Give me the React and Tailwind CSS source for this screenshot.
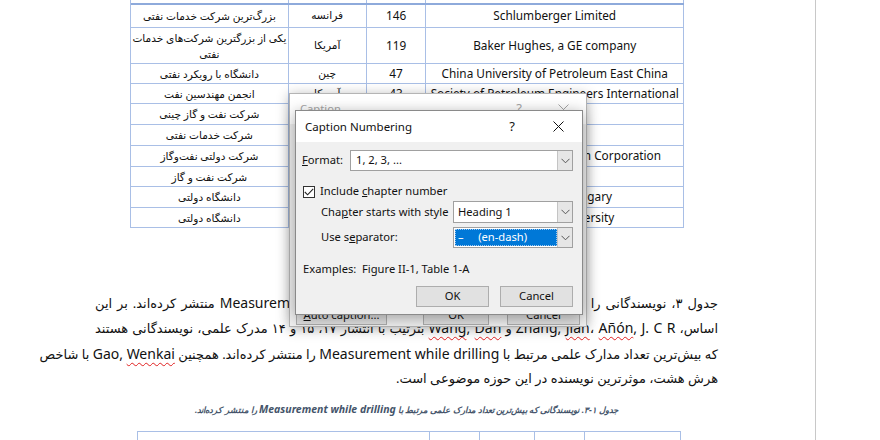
const rows = [
  { h: "h-[23px]", fa: ["بزرگ‌ترین شرکت خدمات نفتی"], c: "فرانسه", n: "146", en: "Schlumberger Limited" },
  { h: "h-[36px]", fa: ["یکی از بزرگترین شرکت‌های خدمات", "نفتی"], c: "آمریکا", n: "119", en: "Baker Hughes, a GE company" },
  { h: "h-[20px]", fa: ["دانشگاه با رویکرد نفتی"], c: "چین", n: "47", en: "China University of Petroleum East China" },
  { h: "h-[20px]", fa: ["انجمن مهندسین نفت"], c: "آمریکا", n: "43", en: "Society of Petroleum Engineers International" },
  { h: "h-[21px]", fa: ["شرکت نفت و گاز چینی"], c: "چین", n: "40", en: "Sinopec" },
  { h: "h-[21px]", fa: ["شرکت خدمات نفتی"], c: "آمریکا", n: "35", en: "Halliburton" },
  { h: "h-[21px]", fa: ["شرکت دولتی نفت‌وگاز"], c: "چین", n: "33", en: "China National Petroleum Corporation" },
  { h: "h-[20px]", fa: ["شرکت نفت و گاز"], c: "نروژ", n: "30", en: "Statoil ASA" },
  { h: "h-[21px]", fa: ["دانشگاه دولتی"], c: "کانادا", n: "28", en: "University of Calgary" },
  { h: "h-[20px]", fa: ["دانشگاه دولتی"], c: "آمریکا", n: "26", en: "Texas A&M University" },
];

const cell = "flex items-center justify-center border-r border-b border-[#a9bfe6] whitespace-nowrap overflow-hidden";

function TopTable() {
  return (
    <div className="ml-[35px] w-[554px] border-l border-[#a9bfe6] text-[#111]">
      <div className="flex h-[5px] border-b-2 border-[#8eaadb]">
        <div className="w-[158px] border-r border-[#a9bfe6]" />
        <div className="w-[78px] border-r border-[#a9bfe6]" />
        <div className="w-[60px] border-r border-[#a9bfe6]" />
        <div className="w-[258px] border-r border-[#a9bfe6]" />
      </div>
      {rows.map((r, i) => (
        <div key={i} className={"flex " + r.h}>
          <div dir="rtl" className={cell + " w-[158px] flex-col text-[10.6px] leading-[16px]"}>
            {r.fa.map((t, j) => (
              <span key={j}>{t}</span>
            ))}
          </div>
          <div dir="rtl" className={cell + " w-[78px] text-[10.6px]"}>{r.c}</div>
          <div className={cell + " w-[60px] text-[11.8px]"}>{r.n}</div>
          <div className={cell + " w-[258px] text-[11.8px]"}>{r.en}</div>
        </div>
      ))}
    </div>
  );
}

const en = "text-[14px]";
const typo = "underline decoration-wavy decoration-[#e02020] decoration-1 underline-offset-[3px]";

function Paragraph() {
  const line = "w-[623px] whitespace-nowrap text-justify [text-align-last:justify] h-[25.3px] leading-[25.3px]";
  return (
    <div dir="rtl" className="mt-[62px] text-[13px] text-[#111]">
      <div className={line}>
        جدول ۳، نویسندگانی را نشان می‌دهد که بیشترین مدارک{" "}
        <span className={en}>Measurement while drilling</span> منتشر کرده‌اند. بر این
      </div>
      <div className={line}>
        اساس، <span className={en}>Zhang, <span className={typo}>Jian</span>، <span className={typo}>Añón</span>, J. C R</span> و{" "}
        <span className={en}><span className={typo}>Wang</span>, <span className={typo}>Dan</span></span> بترتیب با انتشار ۱۷، ۱۵ و ۱۴ مدرک علمی، نویسندگانی هستند
      </div>
      <div className={line}>
        که بیش‌ترین تعداد مدارک علمی مرتبط با <span className={en}>Measurement while drilling</span> را منتشر کرده‌اند. همچنین{" "}
        <span className={en}>Gao, <span className={typo}>Wenkai</span></span> با شاخص
      </div>
      <div className="h-[25.3px] leading-[25.3px] whitespace-nowrap">هرش هشت، موثرترین نویسنده در این حوزه موضوعی است.</div>
    </div>
  );
}

function CaptionLine() {
  return (
    <div dir="rtl" className="mt-[8px] h-[20px] leading-[20px] text-center whitespace-nowrap font-bold italic text-[#44546a] text-[8.5px]">
      جدول ۱-۳. نویسندگانی که بیش‌ترین تعداد مدارک علمی مرتبط با{"  "}
      <span className="text-[10.5px]">Measurement while drilling</span> را منتشر کرده‌اند.
    </div>
  );
}

function BottomTable() {
  const c = "h-[20px] border-r border-[#a9bfe6]";
  return (
    <div className="mt-[12px] ml-[42px] w-[544px] flex border-t border-l border-[#a9bfe6]">
      <div className={c + " w-[293px]"} />
      <div className={c + " w-[50px]"} />
      <div className={c + " w-[55px]"} />
      <div className={c + " w-[50px]"} />
      <div className={c + " w-[96px]"} />
    </div>
  );
}

function Chevron() {
  return (
    <svg width="9" height="6" viewBox="0 0 9 6" fill="none">
      <path d="M0.5 0.8 L4.5 4.8 L8.5 0.8" stroke="#555" strokeWidth="1" />
    </svg>
  );
}

function Close({ color }) {
  return (
    <svg width="11" height="11" viewBox="0 0 11 11" fill="none">
      <path d="M0.5 0.5 L10.5 10.5 M10.5 0.5 L0.5 10.5" stroke={color} strokeWidth="1" />
    </svg>
  );
}

function Combo({ w, children }) {
  return (
    <div className={"flex h-full border border-[#a0a0a0] bg-white " + w}>
      <div className="flex-1 flex items-center min-w-0">{children}</div>
      <div className="w-[15px] flex items-center justify-center bg-[#e6e6e6] border-l border-[#c4c4c4]">
        <Chevron />
      </div>
    </div>
  );
}

function Btn({ w, children }) {
  return (
    <div className={"h-full flex items-center justify-center bg-[#e1e1e1] border border-[#adadad] " + w}>{children}</div>
  );
}

function CaptionDialog() {
  return (
    <div className="absolute left-[289px] top-[93px] w-[298px] h-[234px] flex flex-col border border-[#b4b4b4] bg-[#f0f0f0] shadow-[0_2px_12px_rgba(0,0,0,0.3)] font-['Noto_Sans',sans-serif] text-[11.2px] whitespace-nowrap">
      <div className="h-[30px] bg-white flex items-center text-[#a6a6a6]">
        <span className="flex-1 pl-[10px]">Caption</span>
        <span className="w-[16px] text-center text-[13px]">?</span>
        <span className="ml-[28px] w-[16px] flex justify-center"><Close color="#a6a6a6" /></span>
        <span className="w-[15px]" />
      </div>
      <div className="flex-1" />
      <div className="h-[20px] mb-[1px] flex text-[#111]">
        <div className="ml-[6px]"><Btn w="w-[91px]"><span><span className="underline">A</span>uto caption...</span></Btn></div>
        <div className="ml-[36px]"><Btn w="w-[66px]">OK</Btn></div>
        <div className="ml-[18px]"><Btn w="w-[73px]">Cancel</Btn></div>
      </div>
    </div>
  );
}

function NumberingDialog() {
  return (
    <div className="absolute left-[295px] top-[110px] w-[288px] h-[205px] flex flex-col border border-[#8a8a8a] bg-[#f0f0f0] shadow-[0_3px_14px_rgba(0,0,0,0.35)] font-['Noto_Sans',sans-serif] text-[11.2px] text-[#111] whitespace-nowrap">
      <div className="h-[31px] shrink-0 bg-white flex items-center">
        <span className="flex-1 pl-[9px] text-[11.5px]">Caption Numbering</span>
        <span className="w-[16px] text-center text-[13px]">?</span>
        <span className="ml-[30px] w-[16px] flex justify-center"><Close color="#111" /></span>
        <span className="w-[16px]" />
      </div>
      <div className="flex flex-col pt-[8px]">
        <div className="h-[21px] flex items-center">
          <span className="ml-[6px] w-[48px]"><span className="underline">F</span>ormat:</span>
          <Combo w="w-[223px]"><span className="pl-[5px]">1, 2, 3, ...</span></Combo>
        </div>
        <div className="mt-[14px] h-[13px] flex items-center">
          <div className="ml-[7px] w-[12px] h-[12px] border border-[#333] bg-white flex items-center justify-center">
            <svg width="10" height="8" viewBox="0 0 10 8" fill="none">
              <path d="M0.8 4 L3.6 6.8 L9.2 0.8" stroke="#222" strokeWidth="1.1" />
            </svg>
          </div>
          <span className="ml-[5px]">Include <span className="underline">c</span>hapter number</span>
        </div>
        <div className="mt-[3px] h-[22px] flex items-center">
          <span className="ml-[25px] flex-1">Cha<span className="underline">p</span>ter starts with style</span>
          <Combo w="w-[120px]"><span className="pl-[4px]">Heading 1</span></Combo>
          <span className="w-[9px]" />
        </div>
        <div className="mt-[4px] h-[21px] flex items-center">
          <span className="ml-[25px] flex-1">Use s<span className="underline">e</span>parator:</span>
          <Combo w="w-[120px]">
            <span className="ml-[1px] h-[17px] flex-1 flex items-center bg-[#0078d7] text-white border border-dotted border-[#9cc7f0] whitespace-pre pl-[2px]">
              {"–     (en-dash)"}
            </span>
          </Combo>
          <span className="w-[9px]" />
        </div>
        <div className="mt-[13px] h-[16px] flex items-center">
          <span className="ml-[7px] w-[59px]">Examples:</span>
          <span>Figure II-1, Table 1-A</span>
        </div>
        <div className="mt-[9px] h-[21px] flex justify-end gap-[11px] pr-[9px]">
          <Btn w="w-[73px]">OK</Btn>
          <Btn w="w-[73px]">Cancel</Btn>
        </div>
      </div>
    </div>
  );
}

export default function App() {
  return (
    <div className="relative w-[880px] h-[440px] overflow-hidden bg-white font-['Noto_Sans','DejaVu_Sans',sans-serif]">
      <div className="flex h-full">
        <div className="w-[816px] shrink-0 h-full border-r border-[#c8c8c8] pl-[95px]">
          <div className="w-[623px]">
            <TopTable />
            <Paragraph />
            <CaptionLine />
            <BottomTable />
          </div>
        </div>
      </div>
      <CaptionDialog />
      <NumberingDialog />
    </div>
  );
}
